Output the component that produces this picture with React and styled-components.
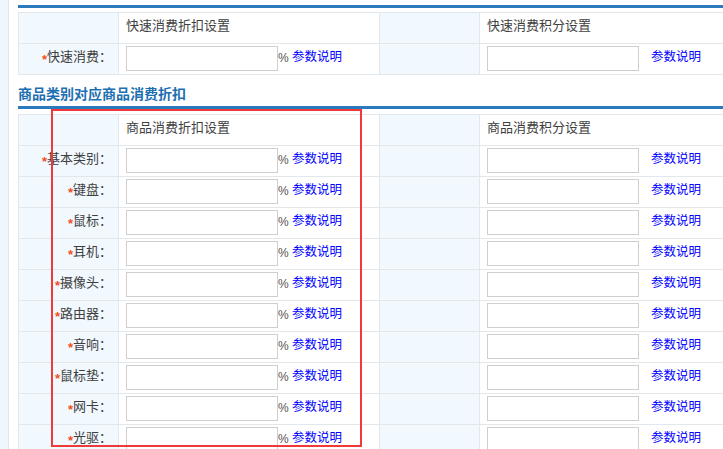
import React from "react";
import styled, { createGlobalStyle } from "styled-components";

const Global = createGlobalStyle`
  html, body { margin: 0; padding: 0; background: #fff; overflow: hidden; }
  body { font-family: "Noto Sans CJK SC", "Liberation Sans", sans-serif; font-size: 13px; color: #444; }
`;

const Page = styled.div`
  display: flex;
  width: 723px;
  height: 449px;
  overflow: hidden;
`;

const Side = styled.div`
  flex: none;
  width: 8px;
  background: #eef6fe;
  border-right: 1px solid #dde4eb;
`;

const Main = styled.div`
  position: relative;
  flex: 1;
  min-width: 0;
  padding: 5px 0 0 9px;
  overflow: hidden;
`;

const Bar = styled.div`
  height: 3px;
  background: #2a7bbd;
`;

const Grid = styled.table`
  border-collapse: collapse;
  table-layout: fixed;
  width: 720px;
  margin-top: ${(p) => p.$gap}px;
`;

const Cell = styled.td`
  border: 1px solid #e2e7ec;
  height: 31px;
  padding: 0 7px ${(p) => (p.$field ? 2 : 6)}px;
  box-sizing: border-box;
  vertical-align: middle;
  white-space: nowrap;
  background: ${(p) => (p.$shade ? "#f1f8fe" : "#fff")};
  text-align: ${(p) => (p.$label ? "right" : "left")};
  padding-right: ${(p) => (p.$label ? 6 : 7)}px;
  color: #3f3f3f;
  font-size: 13px;
  line-height: 16px;
`;

const Star = styled.span`
  color: #f0501a;
  font-family: "Liberation Sans", sans-serif;
  font-weight: bold;
  font-size: 13px;
  position: relative;
  top: 3px;
`;

const Field = styled.input`
  width: 152px;
  height: 25px;
  box-sizing: border-box;
  margin: 0;
  padding: 0 3px;
  border: 1px solid #cfcfcf;
  background: #fff;
  vertical-align: middle;
  outline: none;
`;

const Percent = styled.span`
  display: inline-block;
  width: 14px;
  vertical-align: middle;
  color: #555;
  font-family: "Liberation Sans", sans-serif;
  font-size: 12px;
`;

const Help = styled.a`
  display: inline-block;
  vertical-align: middle;
  position: relative;
  top: -2px;
  margin-left: ${(p) => p.$gap || 0}px;
  color: #0000ff;
  font-size: 12.5px;
  text-decoration: none;
  cursor: pointer;
`;

const Title = styled.div`
  padding: 11px 0 6px;
  font-size: 14px;
  line-height: 14px;
  font-weight: bold;
  color: #1d6fb2;
`;

const Frame = styled.div`
  position: absolute;
  left: 42px;
  top: 109px;
  width: 311px;
  height: 338px;
  box-sizing: border-box;
  border: 2px solid #f03a3a;
  pointer-events: none;
`;

const Cols = () => (
  <colgroup>
    <col style={{ width: 100 }} />
    <col style={{ width: 261 }} />
    <col style={{ width: 100 }} />
    <col />
  </colgroup>
);

function Row({ label }) {
  return (
    <tr>
      <Cell $shade $label>
        <Star>*</Star>
        {label}：
      </Cell>
      <Cell $field>
        <Field />
        <Percent>%</Percent>
        <Help>参数说明</Help>
      </Cell>
      <Cell $shade />
      <Cell $field>
        <Field />
        <Help $gap={12}>参数说明</Help>
      </Cell>
    </tr>
  );
}

function Head({ left, right }) {
  return (
    <tr>
      <Cell $shade />
      <Cell>{left}</Cell>
      <Cell $shade />
      <Cell>{right}</Cell>
    </tr>
  );
}

const cats = ["基本类别", "键盘", "鼠标", "耳机", "摄像头", "路由器", "音响", "鼠标垫", "网卡", "光驱"];

export default function App() {
  return (
    <>
      <Global />
      <Page>
        <Side />
        <Main>
          <Bar />
          <Grid $gap={4}>
            <Cols />
            <tbody>
              <Head left="快速消费折扣设置" right="快速消费积分设置" />
              <Row label="快速消费" />
            </tbody>
          </Grid>
          <Title>商品类别对应商品消费折扣</Title>
          <Bar />
          <Grid $gap={5}>
            <Cols />
            <tbody>
              <Head left="商品消费折扣设置" right="商品消费积分设置" />
              {cats.map((c) => (
                <Row key={c} label={c} />
              ))}
            </tbody>
          </Grid>
          <Frame />
        </Main>
      </Page>
    </>
  );
}
